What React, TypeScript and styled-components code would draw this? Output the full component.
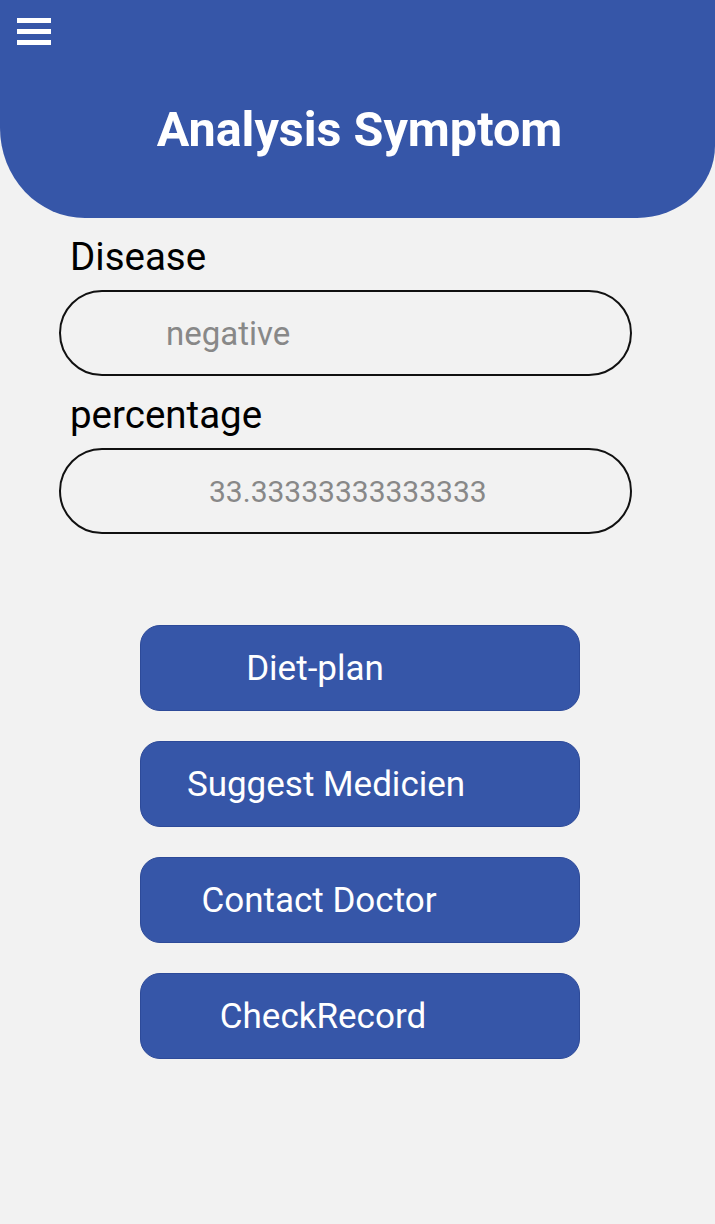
import React from "react";
import styled, { createGlobalStyle } from "styled-components";

const Global = createGlobalStyle`
  html, body { margin: 0; padding: 0; background: #f2f2f2; }
  body { font-family: Roboto, "Liberation Sans", sans-serif; }
`;

const Page = styled.div`
  width: 715px;
  min-height: 1224px;
  background: #f2f2f2;
  display: flex;
  flex-direction: column;
`;

const Header = styled.header`
  height: 218px;
  background: #3656a8;
  border-bottom-left-radius: 85px 90px;
  border-bottom-right-radius: 78px 72px;
  position: relative;
  display: flex;
  justify-content: center;
  box-sizing: border-box;
  padding: 100px 0 0 4px;
`;

const MenuButton = styled.button`
  position: absolute;
  left: 17px;
  top: 18px;
  width: 34px;
  height: 27px;
  padding: 0;
  border: 0;
  background: transparent;
  display: flex;
  flex-direction: column;
  justify-content: space-between;
`;

const MenuBar = styled.span`
  display: block;
  width: 34px;
  height: 5px;
  background: #ffffff;
`;

const Title = styled.h1`
  margin: 0;
  color: #ffffff;
  font-family: Roboto, "Liberation Sans", sans-serif;
  font-weight: 700;
  font-size: 48.5px;
  line-height: 60px;
`;

const Form = styled.section`
  display: flex;
  flex-direction: column;
  padding: 16px 0 0 59px;
`;

const Label = styled.label`
  font-size: 38.5px;
  line-height: 46px;
  color: #000;
  padding-left: 11px;
  margin-bottom: 10px;
`;

const Field = styled.div<{ $indent: number; $size: number }>`
  width: 573px;
  height: 86px;
  box-sizing: border-box;
  border: 2px solid #111;
  border-radius: 43px;
  display: flex;
  align-items: center;
  padding-left: ${(p) => p.$indent}px;
  font-size: ${(p) => p.$size}px;
  color: #888;
  margin-bottom: 16px;
`;

const Actions = styled.nav`
  display: flex;
  flex-direction: column;
  gap: 30px;
  padding: 75px 0 0 140px;
`;

const ActionButton = styled.button<{ $trail: number }>`
  width: 440px;
  height: 86px;
  box-sizing: border-box;
  background: #3656a8;
  border: 1.5px solid #2d4a99;
  border-radius: 20px;
  color: #fff;
  font-family: Roboto, "Liberation Sans", sans-serif;
  font-size: 35px;
  padding: 0 ${(p) => p.$trail}px 0 0;
  text-align: center;
`;

export default function App() {
  return (
    <Page>
      <Global />
      <Header>
        <MenuButton aria-label="menu">
          <MenuBar />
          <MenuBar />
          <MenuBar />
        </MenuButton>
        <Title>Analysis Symptom</Title>
      </Header>
      <Form>
        <Label>Disease</Label>
        <Field $indent={105} $size={33}>negative</Field>
        <Label>percentage</Label>
        <Field $indent={148} $size={30}>33.33333333333333</Field>
      </Form>
      <Actions>
        <ActionButton $trail={90}>Diet-plan</ActionButton>
        <ActionButton $trail={68}>Suggest Medicien</ActionButton>
        <ActionButton $trail={82}>Contact Doctor</ActionButton>
        <ActionButton $trail={74}>CheckRecord</ActionButton>
      </Actions>
    </Page>
  );
}
